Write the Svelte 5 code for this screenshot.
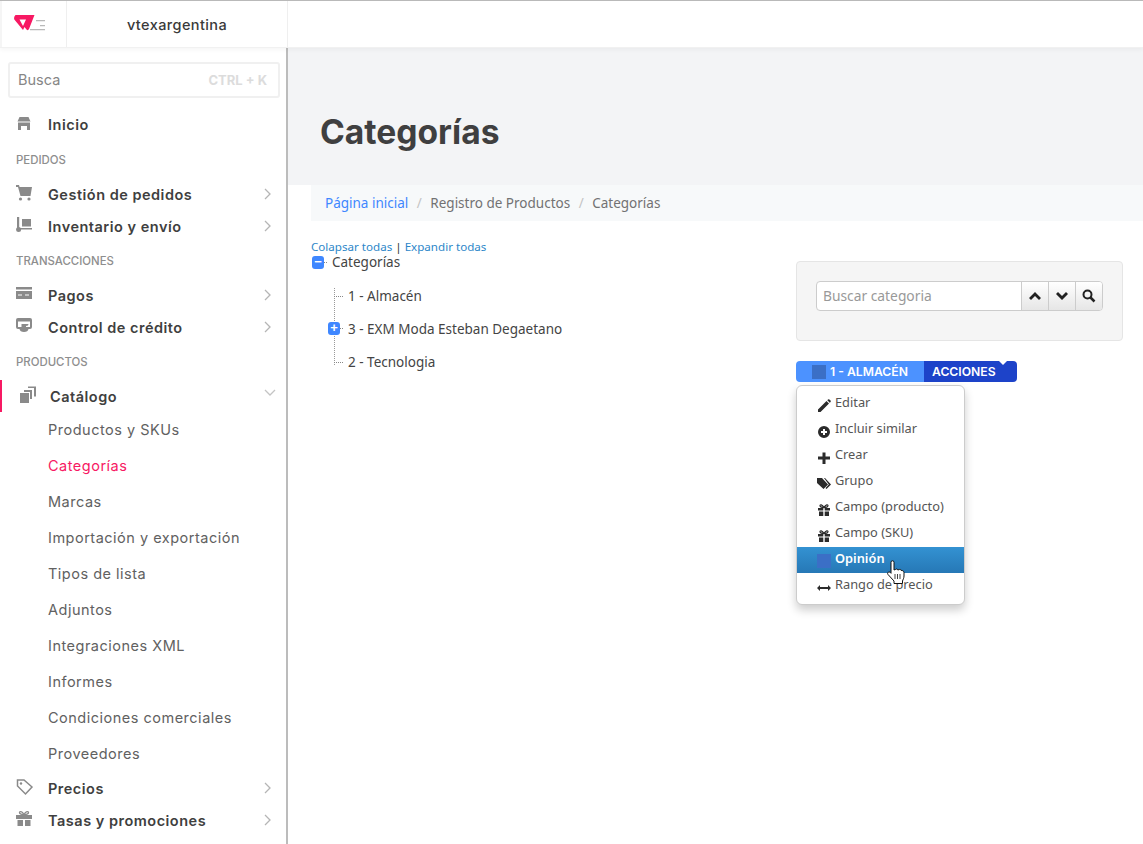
<script lang="ts">
  const chev = 'M1 1l5 5-5 5';
  const catalogo = ['Productos y SKUs', 'Categorías', 'Marcas', 'Importación y exportación', 'Tipos de lista', 'Adjuntos', 'Integraciones XML', 'Informes', 'Condiciones comerciales', 'Proveedores'];
  const menu = [
    { label: 'Editar', icon: 'pencil' },
    { label: 'Incluir similar', icon: 'plus-circle' },
    { label: 'Crear', icon: 'plus' },
    { label: 'Grupo', icon: 'tags' },
    { label: 'Campo (producto)', icon: 'gift' },
    { label: 'Campo (SKU)', icon: 'gift' },
    { label: 'Opinión', icon: 'square', active: true },
    { label: 'Rango de precio', icon: 'arrows' }
  ];
</script>

{#snippet arrow()}
  <svg class="chev" width="8" height="12" viewBox="0 0 8 12"><path d={chev} fill="none" stroke="#b5b5b5" stroke-width="1.3" /></svg>
{/snippet}

{#snippet navIcon(name: string)}
  <svg class="nav-ic" width="18" height="18" viewBox="0 0 18 18" fill="#8a8a8a">
    {#if name === 'store'}
      <path d="M3.500 3h9l2 4.500H1.500z" /><path d="M2 8.500h12V16h-3v-4H5v4H2z" />
    {:else if name === 'cart'}
      <path d="M0 1h3l.6 2H16l-1.500 9H4.500L2 3H0z" /><circle cx="4.500" cy="15" r="1.600" /><circle cx="13" cy="15" r="1.600" />
    {:else if name === 'dolly'}
      <path d="M1 1h2.200v11H16v1.600H3.200V12H1z" /><rect x="6" y="3" width="9" height="7.500" /><circle cx="2.600" cy="13.600" r="2.500" />
    {:else if name === 'card'}
      <path d="M0 2h16v2.500H0z" /><path fill-rule="evenodd" d="M0 6h16v8H0zM2 9.500v1h4v-1zM9 9.500v1h4v-1z" />
    {:else if name === 'credit'}
      <path fill-rule="evenodd" d="M2 1h12q2 0 2 2v7q0 2-2 2h-1.500q-.5 3-4.500 3t-4.500-3H2q-2 0-2-2V3q0-2 2-2zM2 4.500V10h3.500V7h7l-.5 1.500-2 .5v1h4V4.500z" />
    {:else if name === 'catalog'}
      <rect x="2" y="7" width="9" height="10" /><path d="M6 6V4h8v9h-2V6zM10 2V.5h8v10h-2V2z" />
    {:else if name === 'tag'}
      <path d="M1.500 2h6.500l8 7-6.500 7-8-8z" fill="none" stroke="#8a8a8a" stroke-width="1.500" /><circle cx="5" cy="5.500" r="1.200" />
    {:else if name === 'gift'}
      <path d="M0 5h16v4H0zM1.500 10H7v6H1.500zM9 10h5.500v6H9z" /><path d="M8 4.500C5 4.500 3.500 3.500 3.500 2.500s2.500-2 4.500 2c2-4 4.500-3 4.500-2s-1.500 2-4.500 2" fill="none" stroke="#8a8a8a" stroke-width="1.300" />
    {/if}
  </svg>
{/snippet}

{#snippet menuIcon(name: string)}
  <svg class="m-ic" width="14" height="14" viewBox="0 0 14 14" fill="#2b2b2b">
    {#if name === 'pencil'}
      <path d="M1 10.500 9.500 2l2.500 2.500L3.500 13H1zM10.300 1.200l.7-.7a1 1 0 0 1 1.400 0l1.100 1.100a1 1 0 0 1 0 1.400l-.7.700z" />
    {:else if name === 'plus-circle'}
      <path fill-rule="evenodd" d="M7 1a6 6 0 1 1 0 12A6 6 0 0 1 7 1zM6 4v2H4v2h2v2h2V8h2V6H8V4z" />
    {:else if name === 'plus'}
      <path d="M5.500 1.500h3v4H13v3H8.500v4.500h-3V8.500H1v-3h4.500z" />
    {:else if name === 'tags'}
      <path d="M0 1h5l6 6.500L6.500 12 0 6zM7 1h1l6 6.500L9.500 12l-1-1 3.300-3.500z" />
    {:else if name === 'gift'}
      <path d="M1 5h5.300v2.500H1zM7.700 5H13v2.500H7.700zM2 8.500h4.300V13H2zM7.700 8.500H12V13H7.700z" /><path d="M7 4.500C4 4.500 3 3.500 3 2.500s2-1.500 4 2c2-3.500 4-3 4-2s-1 2-4 2" fill="none" stroke="#2b2b2b" stroke-width="1.200" />
    {:else if name === 'arrows'}
      <path d="M0 7l3-3v2h8V4l3 3-3 3V8H3v2z" />
    {/if}
  </svg>
{/snippet}

<div class="page">
  <header class="topbar">
    <div class="logo">
      <svg width="32" height="16" viewBox="0 0 32 16">
        <path fill="#f71963" fill-rule="evenodd" d="M1.500 0H20.500L15 14q-1 2-2.500.5L10.500 12 9 15 .3 4.500Q-.5 2 1.500 0zM5.500 4.500h6.500L9 11z" />
        <path fill="#b9b9b9" d="M22 5h9v1.300h-9zM26 10h5v1.300h-5zM16 14h15v1.300H16z" />
      </svg>
    </div>
    <div class="account">vtexargentina</div>
  </header>

  <div class="body">
    <aside class="sidebar">
      <div class="search"><span>Busca</span><b>CTRL + K</b></div>
      <a class="item first">{@render navIcon('store')}<span>Inicio</span></a>
      <div class="group">PEDIDOS</div>
      <a class="item">{@render navIcon('cart')}<span>Gestión de pedidos</span>{@render arrow()}</a>
      <a class="item">{@render navIcon('dolly')}<span>Inventario y envío</span>{@render arrow()}</a>
      <div class="group">TRANSACCIONES</div>
      <a class="item">{@render navIcon('card')}<span>Pagos</span>{@render arrow()}</a>
      <a class="item">{@render navIcon('credit')}<span>Control de crédito</span>{@render arrow()}</a>
      <div class="group">PRODUCTOS</div>
      <a class="item open">
        {@render navIcon('catalog')}<span>Catálogo</span>
        <svg class="chev down" width="12" height="8" viewBox="0 0 12 8"><path d="M1 1l5 5 5-5" fill="none" stroke="#c4c4c4" stroke-width="1.300" /></svg>
      </a>
      <ul class="sub">
        {#each catalogo as c}
          <li class:current={c === 'Categorías'}>{c}</li>
        {/each}
      </ul>
      <a class="item">{@render navIcon('tag')}<span>Precios</span>{@render arrow()}</a>
      <a class="item">{@render navIcon('gift')}<span>Tasas y promociones</span>{@render arrow()}</a>
    </aside>

    <main class="main">
      <div class="hero"><h1>Categorías</h1></div>
      <nav class="crumbs">
        <a href="#top">Página inicial</a><i>/</i><span>Registro de Productos</span><i>/</i><span>Categorías</span>
      </nav>
      <div class="content">
        <section class="tree">
          <div class="links"><a href="#top">Colapsar todas</a> | <a href="#top">Expandir todas</a></div>
          <div class="root"><span class="tog">−</span><span class="dots"></span><span>Categorías</span></div>
          <ul class="branch">
            <li><span class="dash"></span>1 - Almacén</li>
            <li><span class="tog">+</span><span class="dots"></span>3 - EXM Moda Esteban Degaetano</li>
            <li><span class="dash"></span>2 - Tecnologia</li>
          </ul>
        </section>
        <section class="side">
          <div class="well">
            <div class="field">
              <span class="input">Buscar categoria</span>
              <button aria-label="Anterior"><svg width="14" height="10" viewBox="0 0 14 10"><path d="M7 1l6 6-2 2-4-4-4 4-2-2z" fill="#222" /></svg></button>
              <button aria-label="Siguiente"><svg width="14" height="10" viewBox="0 0 14 10"><path d="M7 9L1 3l2-2 4 4 4-4 2 2z" fill="#222" /></svg></button>
              <button aria-label="Buscar"><svg width="14" height="14" viewBox="0 0 14 14"><circle cx="5.500" cy="5.500" r="4" fill="none" stroke="#222" stroke-width="2" /><path d="M8.500 8.500l4 4" stroke="#222" stroke-width="2.500" /></svg></button>
            </div>
          </div>
          <div class="bar">
            <div class="name"><span class="sq"></span>1 - ALMACÉN</div>
            <div class="acts">ACCIONES<span class="notch"></span></div>
          </div>
          <ul class="menu">
            {#each menu as m}
              <li class:active={m.active}>
                {#if m.icon === 'square'}<span class="sq"></span>{:else}{@render menuIcon(m.icon)}{/if}
                <span>{m.label}</span>
              </li>
            {/each}
            <svg class="cursor" width="18" height="24" viewBox="0 0 18 24">
              <path d="M4 2.300a1.500 1.500 0 0 1 3 0V10l1.500-.5a1.300 1.300 0 0 1 2.300.5l1.300-.3a1.200 1.200 0 0 1 2 .7l.9.1c1.200.2 2 1 2 2.200V16c0 2-1 3.500-1.500 5v2.500H7V21L1 14.500c-1.300-1.600.8-3.300 2-2.200l1 1z" fill="#fff" stroke="#111" stroke-width="1" />
              <path d="M8 14v5M10.500 14v5M13 14v5" stroke="#111" stroke-width=".8" />
            </svg>
          </ul>
        </section>
      </div>
    </main>
  </div>
</div>

<style>
  :global(body) {
    margin: 0;
    background: #fff;
    overflow: hidden;
  }
  .page {
    width: 1143px;
    height: 844px;
    overflow: hidden;
    font-family: "Noto Sans", sans-serif;
    color: #3f3f40;
    border-top: 1px solid #b9b9b9;
    box-sizing: border-box;
  }
  .topbar {
    position: relative;
    display: flex;
    height: 47px;
    box-sizing: border-box;
    background: #fff;
    border-bottom: 1px solid #f1f1f1;
    box-shadow: 0 2px 4px rgba(0, 0, 0, .04);
  }
  .logo {
    width: 67px;
    display: flex;
    align-items: center;
    box-sizing: border-box;
    padding: 0 0 3px 12px;
    border-right: 1px solid #efefef;
    border-left: 2px solid #f5f5f5;
  }
  .account {
    width: 221px;
    box-sizing: border-box;
    display: flex;
    align-items: center;
    justify-content: center;
    border-right: 1px solid #efefef;
    font-family: Inter, sans-serif;
    font-size: 14.500px;
    font-weight: 500;
    letter-spacing: .4px;
    color: #3a3a3a;
  }
  .body {
    display: flex;
    height: 796px;
  }
  .sidebar {
    width: 288px;
    flex: none;
    box-sizing: border-box;
    border-right: 2px solid #bcbcbc;
    padding: 14px 0 0;
    font-family: Inter, sans-serif;
  }
  .search {
    margin: 0 6px 0 8px;
    height: 36px;
    box-sizing: border-box;
    border: 2px solid #f0f0f0;
    border-radius: 3px;
    padding: 0 11px 1px 8px;
    display: flex;
    align-items: center;
    justify-content: space-between;
    font-size: 14.500px;
    color: #868686;
  }
  .search b {
    font-size: 13px;
    color: #dcdcdc;
  }
  .item {
    position: relative;
    display: flex;
    align-items: center;
    height: 32px;
    padding: 0 14px 0 16px;
    font-size: 14.500px;
    font-weight: 600;
    letter-spacing: .5px;
    color: #3f3f40;
  }
  .item.first {
    margin: 10px 0 1px;
  }
  .item span {
    flex: 1;
    margin-left: 14px;
  }
  .nav-ic {
    flex: none;
    margin-top: -2px;
  }
  .group {
    height: 37px;
    box-sizing: border-box;
    padding: 12px 16px 0;
    font-size: 11.400px;
    font-weight: 500;
    color: #8e8e8e;
  }
  .chev {
    flex: none;
  }
  .item.open {
    padding-left: 18px;
  }
  .item.open::before {
    content: "";
    position: absolute;
    left: 0;
    top: 0;
    width: 2px;
    height: 32px;
    background: #f71963;
  }
  .down {
    margin: -6px -4px 0 0;
  }
  .sub {
    list-style: none;
    margin: 0;
    padding: 0 0 0 48px;
    font-size: 14.500px;
    letter-spacing: .5px;
    color: #616161;
  }
  .sub li {
    height: 36px;
    line-height: 36px;
  }
  .sub .current {
    color: #f71963;
  }
  .main {
    flex: 1;
    min-width: 0;
  }
  .hero {
    height: 137px;
    box-sizing: border-box;
    background: #f3f4f6;
    padding: 62px 32px 0;
  }
  h1 {
    margin: 0;
    font-family: Inter, sans-serif;
    font-size: 33.600px;
    line-height: 44px;
    font-weight: 700;
    color: #3f3f40;
  }
  .crumbs {
    margin-left: 23px;
    height: 36px;
    box-sizing: border-box;
    background: #f7f9fa;
    display: flex;
    align-items: center;
    padding: 0 14px 1px;
    font-size: 13.500px;
    color: #727273;
  }
  .crumbs a {
    color: #3f87ff;
    text-decoration: none;
  }
  .crumbs i {
    font-style: normal;
    color: #c4c4c4;
    margin: 0 8.500px;
  }
  .content {
    display: flex;
    justify-content: space-between;
    padding: 19px 20px 0 23px;
    font-size: 13.500px;
  }
  .links {
    font-size: 11.600px;
    line-height: 14px;
    color: #333;
  }
  .links a {
    color: #2d87c9;
    text-decoration: none;
  }
  .tree {
    width: 400px;
  }
  .root {
    display: flex;
    align-items: center;
    height: 16px;
    line-height: 16px;
    color: #444;
  }
  .tog {
    width: 12px;
    height: 13px;
    flex: none;
    background: #3f87ff;
    border-radius: 3px;
    color: #fff;
    font-size: 13px;
    line-height: 12px;
    font-weight: 700;
    text-align: center;
    font-family: "Liberation Sans", sans-serif;
  }
  .root .tog {
    margin-left: 1px;
  }
  .dots {
    width: 3px;
    margin: 0 5px 0 0;
    border-top: 1px dotted #888;
  }
  .branch {
    position: relative;
    list-style: none;
    margin: 9px 0 0 23px;
    padding: 0;
    height: 99px;
    color: #444;
  }
  .branch::before {
    content: "";
    position: absolute;
    left: 0;
    top: 9px;
    height: 77px;
    border-left: 1px dotted #999;
  }
  .branch li {
    position: relative;
    display: flex;
    align-items: center;
    height: 33px;
  }
  .branch .tog {
    margin-left: -6px;
  }
  .dash {
    width: 9px;
    margin-right: 5px;
    margin-top: 1px;
    border-top: 1px dotted #888;
  }
  .side {
    width: 327px;
    margin-top: 21px;
  }
  .well {
    height: 80px;
    box-sizing: border-box;
    background: #f5f5f5;
    border: 1px solid #e5e5e5;
    border-radius: 4px;
    padding: 19px 19px 0;
  }
  .field {
    display: flex;
    height: 30px;
    width: 287px;
    box-sizing: border-box;
    border: 1px solid #ccc;
    border-radius: 4px;
    overflow: hidden;
    background: #fff;
  }
  .input {
    width: 204px;
    box-sizing: border-box;
    padding-left: 6px;
    line-height: 27px;
    color: #999;
    font-size: 13.800px;
  }
  .field button {
    width: 27px;
    padding: 0;
    border: 0;
    border-left: 1px solid #ccc;
    background: linear-gradient(#fff, #e6e6e6);
    display: flex;
    align-items: center;
    justify-content: center;
  }
  .bar {
    display: flex;
    width: 221px;
    height: 21px;
    margin-top: 20px;
    color: #fff;
    font-family: Inter, sans-serif;
    font-size: 12.200px;
    font-weight: 600;
    line-height: 21px;
    border-radius: 4px;
    overflow: hidden;
  }
  .name {
    width: 128px;
    background: #4c92ff;
    display: flex;
    align-items: center;
    padding-left: 16px;
    box-sizing: border-box;
  }
  .sq {
    display: inline-block;
    width: 14px;
    height: 14px;
    flex: none;
    background: #3b6fc6;
  }
  .name .sq {
    margin-right: 4px;
    margin-top: 1px;
  }
  .acts {
    position: relative;
    flex: 1;
    background: #1d43c9;
    padding-left: 8px;
  }
  .notch {
    position: absolute;
    right: 10px;
    top: 0;
    border: 4px solid transparent;
    border-top: 4px solid #fff;
    border-bottom: 0;
  }
  .menu {
    position: relative;
    list-style: none;
    margin: 3px 0 0;
    padding: 5px 0 0;
    width: 169px;
    height: 220px;
    box-sizing: border-box;
    background: #fff;
    border: 1px solid #ccc;
    border-radius: 6px;
    box-shadow: 0 5px 10px rgba(0, 0, 0, .2);
    font-size: 12.800px;
    color: #555;
  }
  .menu li {
    display: flex;
    align-items: flex-start;
    height: 26px;
    line-height: 26px;
    padding-left: 20px;
    box-sizing: border-box;
    gap: 4px;
  }
  .m-ic {
    margin-top: 8px;
    flex: none;
  }
  .menu li span:last-child {
    margin-top: -2px;
  }
  .menu .active {
    background: linear-gradient(#3392d2, #2678b6);
    color: #fff;
    font-weight: 600;
  }
  .menu .sq {
    margin-top: 7px;
  }
  .cursor {
    position: absolute;
    left: 90px;
    top: 174px;
  }
</style>
